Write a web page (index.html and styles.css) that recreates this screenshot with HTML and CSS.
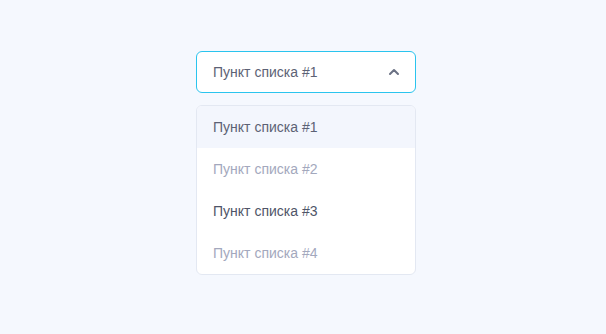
FILE: index.html
```html
<!DOCTYPE html>
<html lang="ru">
<head>
    <meta charset="UTF-8">
    <meta name="viewport" content="width=device-width, initial-scale=1.0">
    <title>Select</title>
    <link rel="stylesheet" href="styles.css">
</head>
<body>
    <div class="select">
        <div class="select-box">
            <span>Пункт списка #1</span>
            <svg class="chevron" width="12" height="8" viewBox="0 0 12 8">
                <path d="M2 6 L6 2 L10 6" fill="none" stroke="#6b7184" stroke-width="2" stroke-linecap="round" stroke-linejoin="round"/>
            </svg>
        </div>
        <ul class="select-list">
            <li class="item active">Пункт списка #1</li>
            <li class="item muted">Пункт списка #2</li>
            <li class="item">Пункт списка #3</li>
            <li class="item muted">Пункт списка #4</li>
        </ul>
    </div>
</body>
</html>
```

FILE: styles.css
```css
* {
    margin: 0;
    padding: 0;
    box-sizing: border-box;
}

body {
    font-family: 'Liberation Sans', Arial, sans-serif;
    font-size: 14px;
    background-color: #f5f8fe;
    color: #4f5568;
    padding-top: 51px;
}

.select {
    width: 220px;
    margin-left: 196px;
}

.select-box {
    height: 42px;
    display: flex;
    align-items: center;
    justify-content: space-between;
    padding: 0 15px 0 16px;
    background-color: #fff;
    border: 1px solid #2ac4ee;
    border-radius: 6px;
    color: #5c6275;
}

.chevron {
    display: block;
}

.select-list {
    list-style: none;
    margin-top: 12px;
    background-color: #fff;
    border: 1px solid #e3e8f2;
    border-radius: 6px;
    overflow: hidden;
}

.item {
    height: 42px;
    display: flex;
    align-items: center;
    padding-left: 16px;
    color: #4f5568;
}

.item.active {
    background-color: #f3f6fd;
    color: #5c6275;
}

.item.muted {
    color: #a3a8bd;
}
```
